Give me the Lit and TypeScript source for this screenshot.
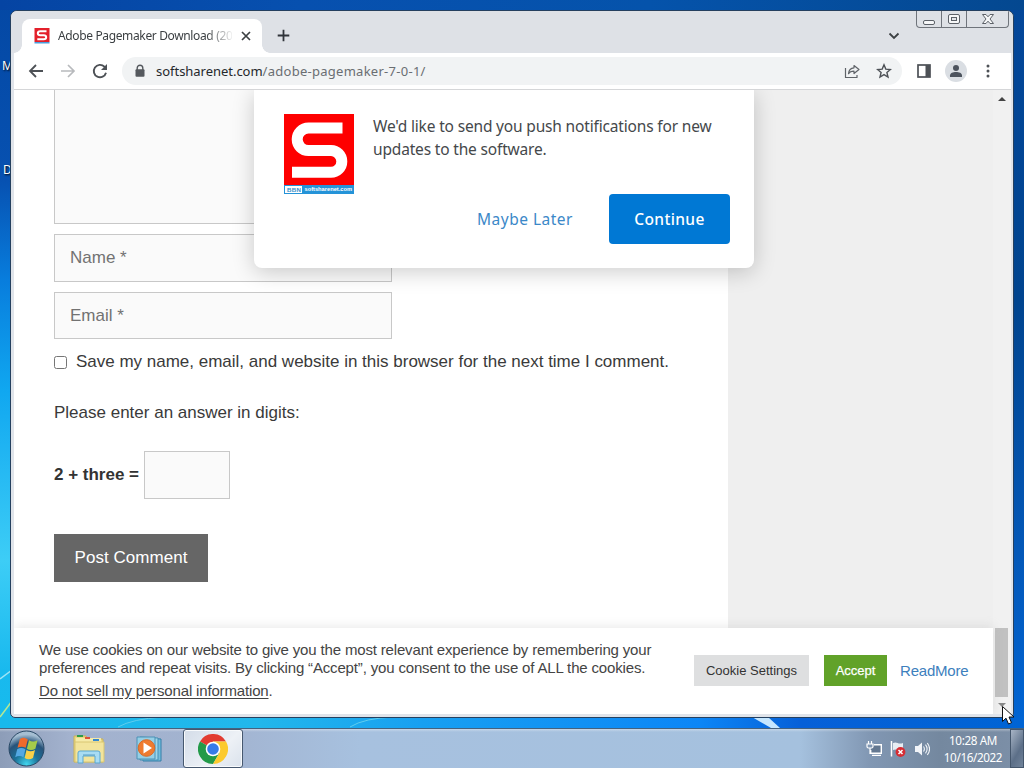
import { LitElement, html, css, svg } from "lit";
import { customElement } from "lit/decorators.js";

const brandLogo = html`<svg class="brand" viewBox="0 0 70 80">
  <rect width="70" height="72" fill="#fe0000" />
  <path d="M58.500 14H24.500A11.300 11.300 0 0 0 24.500 36.600H47A10.800 10.800 0 0 1 47 58.200H8" fill="none" stroke="#fff" stroke-width="11" />
  <rect y="71" width="70" height="9" fill="#2493d8" />
  <rect x="1" y="72" width="17" height="7" fill="#fff" />
  <text x="3" y="78" font-size="6.200" font-weight="700" fill="#3a8fc8" textLength="14">BBN</text>
  <text x="20.500" y="77" font-size="6" font-weight="700" fill="#fff" textLength="47.500" lengthAdjust="spacingAndGlyphs">softsharenet.com</text>
</svg>`;

@customElement("chrome-toolbar")
export class ChromeToolbar extends LitElement {
  static styles = css`
    :host { display: block; font-family: "Noto Sans", sans-serif; color: #3c4043; }
    svg { display: block; flex: none; }
    .strip { height: 42px; display: flex; background: #dee1e6; border-radius: 5px 5px 0 0; padding-left: 11px; align-items: flex-start; }
    .tab { position: relative; margin-top: 8px; width: 240px; height: 34px; background: #fff; border-radius: 8px 8px 0 0; display: flex; align-items: center; box-sizing: border-box; padding-left: 12px; }
    .tab::before, .tab::after { content: ""; position: absolute; bottom: 0; width: 8px; height: 8px; }
    .tab::before { left: -8px; background: radial-gradient(circle at 0 0, transparent 7.5px, #fff 8px); }
    .tab::after { right: -8px; background: radial-gradient(circle at 100% 0, transparent 7.5px, #fff 8px); }
    .title { width: 174px; margin-left: 8px; overflow: hidden; white-space: nowrap; font-size: 12px; letter-spacing: -0.36px; line-height: 18px; -webkit-mask-image: linear-gradient(90deg, #000 148px, transparent 176px); mask-image: linear-gradient(90deg, #000 148px, transparent 176px); }
    .close { margin-left: 8px; }
    .plus { margin: 18px 0 0 15px; }
    .space { flex: 1; }
    .chev { margin: 21px 16px 0 0; }
    .caption { display: flex; width: 91px; height: 16px; border: 1px solid #6f747b; border-top: 0; border-radius: 0 0 4px 4px; margin-right: 4px; }
    .caption div { display: flex; align-items: center; justify-content: center; box-sizing: border-box; border-right: 1px solid #6f747b; width: 25px; }
    .caption div:last-child { width: 41px; border: 0; }
    .bar { margin: 0 2px 0 3px; height: 36px; background: #fff; display: flex; align-items: center; border-bottom: 1px solid #d5d6d8; padding-left: 14px; }
    .bar > svg { margin-right: 16px; }
    .omni { margin-left: -2px; width: 780px; height: 28px; border-radius: 14px; background: #f1f3f4; display: flex; align-items: center; box-sizing: border-box; padding: 0 10px 0 12px; }
    .url { margin-left: 10px; flex: 1; font-size: 13px; color: #6a6e72; white-space: nowrap; line-height: 20px; letter-spacing: .27px; }
    .url b { font-weight: 400; color: #25282c; letter-spacing: -.03px; }
    .share { margin-right: 16px; }
    .panel { margin-left: 14px; }
    .avatar { width: 22px; height: 22px; border-radius: 50%; background: #dadee3; display: flex; align-items: center; justify-content: center; margin: 0 19px 0 -3px; }
  `;
  render() {
    return html`
      <div class="strip">
        <div class="tab">
          <svg width="16" height="16" viewBox="0 0 16 16"><path fill="#e3202b" d="M.5 0h15v14H.5z"/><path fill="#4aa0dd" d="M.5 14h15v1.500H.5z"/><path d="M12.500 3.200H6.300C3 3.200 3 7.200 6.300 7.200h3.400c3.300 0 3.300 4.100 0 4.100H3.300" fill="none" stroke="#fff" stroke-width="2"/></svg>
          <div class="title">Adobe Pagemaker Download (2022)</div>
          <svg class="close" width="12" height="12" viewBox="0 0 12 12"><path d="M2 2l8 8M10 2l-8 8" stroke="#3c4043" stroke-width="1.700"/></svg>
        </div>
        <svg class="plus" width="13" height="13" viewBox="0 0 13 13"><path d="M6.500 .7v11.600M.7 6.500h11.600" stroke="#30343a" stroke-width="1.800"/></svg>
        <div class="space"></div>
        <svg class="chev" width="12" height="8" viewBox="0 0 12 8"><path d="M1.500 1.500L6 6l4.500-4.500" fill="none" stroke="#3c4043" stroke-width="1.800"/></svg>
        <div class="caption">
          <div><svg width="14" height="14" viewBox="0 0 14 14"><rect x="1.500" y="8.500" width="11" height="4" rx="1.500" fill="#f6f7f8" stroke="#5c6168"/></svg></div>
          <div><svg width="14" height="14" viewBox="0 0 14 14"><rect x="1.500" y="2.500" width="11" height="9" rx="1.500" fill="#f6f7f8" stroke="#5c6168"/><rect x="4.500" y="5.500" width="5" height="3" fill="#e4e6ea" stroke="#5c6168"/></svg></div>
          <div><svg width="14" height="14" viewBox="0 0 14 14"><path d="M1.500 2.500h3.500l2 2.300 2-2.300h3.500L9 7l3.500 4.500H9L7 9.200l-2 2.300H1.500L5 7z" fill="#f6f7f8" stroke="#5c6168"/></svg></div>
        </div>
      </div>
      <div class="bar">
        <svg width="16" height="16" viewBox="0 0 16 16"><path d="M15 8H2.500M8 2L2 8l6 6" fill="none" stroke="#4d5156" stroke-width="1.800"/></svg>
        <svg width="16" height="16" viewBox="0 0 16 16"><path d="M1 8h12.500M8 2l6 6-6 6" fill="none" stroke="#b8babd" stroke-width="1.700"/></svg>
        <svg width="16" height="16" viewBox="0 0 16 16"><path d="M14 9.700A6.200 6.200 0 1 1 12.400 3.700L14 5.300" fill="none" stroke="#4d5156" stroke-width="1.900"/><path d="M15 1v6H9z" fill="#4d5156"/></svg>
        <div class="omni">
          <svg width="12" height="14" viewBox="0 0 12 14"><path d="M3.200 6V4a2.800 2.800 0 0 1 5.600 0v2" fill="none" stroke="#55595e" stroke-width="1.400"/><rect x="1.500" y="5.300" width="9" height="7.500" rx="1" fill="#55595e"/></svg>
          <div class="url"><b>softsharenet.com</b>/adobe-pagemaker-7-0-1/</div>
          <svg class="share" width="16" height="16" viewBox="0 0 16 16"><path d="M1.500 5v9.500h11.500v-2.500M10 2.500l5 4-5 4V8.200C7 8.200 5.500 9 4.500 10.700 4.800 7.200 7 5 10 4.800z" fill="none" stroke="#5f6368" stroke-width="1.200" stroke-linejoin="round"/></svg>
          <svg width="16" height="16" viewBox="0 0 16 16"><path d="M8 1.800l1.800 4.300 4.600.4-3.500 3 1.100 4.500L8 11.600 4 14l1.100-4.500-3.500-3 4.600-.4z" fill="none" stroke="#4d5156" stroke-width="1.400"/></svg>
        </div>
        <svg class="panel" width="16" height="16" viewBox="0 0 16 16"><rect x="2" y="2" width="12" height="12" fill="none" stroke="#4d5156" stroke-width="1.700"/><path d="M9.500 2H14v12H9.500z" fill="#4d5156"/></svg>
        <div class="avatar"><svg width="14" height="14" viewBox="0 0 14 14"><circle cx="7" cy="4" r="3" fill="#4c535d"/><path d="M1 13V11.500C1 9 4 8 7 8s6 1 6 3.500V13z" fill="#4c535d"/></svg></div>
        <svg width="4" height="16" viewBox="0 0 4 16"><g fill="#4d5156"><circle cx="2" cy="3" r="1.500"/><circle cx="2" cy="8" r="1.500"/><circle cx="2" cy="13" r="1.500"/></g></svg>
      </div>`;
  }
}

@customElement("comment-page")
export class CommentPage extends LitElement {
  static styles = css`
    :host { display: flex; position: relative; height: 624px; margin: 0 2px 0 3px; overflow: hidden; background: #f1f1f1; font-family: "Liberation Sans", sans-serif; font-size: 17px; color: #3a3a3a; }
    .form { width: 714px; height: 624px; background: #fff; box-sizing: border-box; padding-left: 40px; white-space: nowrap; }
    .side { width: 265px; background: #efefef; }
    .field { box-sizing: border-box; width: 338px; border: 1px solid #c8c8c8; background: #fafafa; color: #727272; padding-left: 15px; }
    .area { height: 134px; border-top: 0; }
    .name { height: 48px; margin-top: 10px; line-height: 46px; }
    .email { height: 47px; margin-top: 10px; line-height: 46px; }
    .save { display: flex; align-items: center; height: 24px; margin-top: 11px; letter-spacing: -0.005px; }
    .check { width: 13px; height: 13px; box-sizing: border-box; border: 1px solid #767676; border-radius: 2.500px; margin: 1px 9px 0 0; background: #fff; }
    .ask { margin-top: 26px; line-height: 26px; }
    .sum { display: flex; align-items: center; height: 48px; margin-top: 25px; font-weight: 700; color: #333; }
    .answer { width: 86px; height: 48px; margin-left: 5px; }
    .post { margin-top: 35px; width: 154px; height: 48px; line-height: 47px; text-align: center; background: #666; color: #fff; letter-spacing: .04px; }
    .scroll { width: 17px; display: flex; flex-direction: column; align-items: center; }
    .up { margin-top: 7px; border: 4px solid transparent; border-top: 0; border-bottom: 4px solid #444; }
    .thumb { margin-top: 527px; width: 13px; height: 69px; background: #c1c1c1; }
    .down { margin-top: 6px; border: 4px solid transparent; border-bottom: 0; border-top: 4px solid #888; }
    .push { position: absolute; left: 240px; top: 0; width: 500px; height: 178px; box-sizing: border-box; border-radius: 0 0 8px 8px; background: #fff; box-shadow: 0 4px 22px rgba(0,0,0,.2); padding: 24px 24px 0 30px; display: flex; font-family: "Noto Sans", sans-serif; font-size: 15.500px; }
    .brand { width: 70px; height: 80px; flex: none; font-family: "Liberation Sans", sans-serif; }
    .msg { margin-left: 19px; flex: 1; }
    .text { line-height: 23px; margin-top: 1px; white-space: nowrap; color: #45484b; letter-spacing: -.17px; }
    .acts { display: flex; justify-content: flex-end; align-items: center; margin-top: 33px; letter-spacing: .5px; }
    .later { color: #3b88c8; margin-right: 36px; }
    .go { width: 121px; height: 50px; line-height: 50px; text-align: center; border-radius: 4px; background: #0078d4; color: #fff; font-weight: 500; letter-spacing: .35px; }
    .cookie { position: absolute; left: 0; top: 538px; width: 979px; height: 86px; box-sizing: border-box; background: #fff; box-shadow: 0 -1px 10px rgba(172,171,171,.3); display: flex; align-items: center; padding: 0 25px 2px; font-size: 15px; color: #444; }
    .words { width: 655px; flex: none; line-height: 18px; white-space: nowrap; letter-spacing: -0.16px; }
    .words u { text-underline-offset: 2px; }
    .l3 { margin-top: 5px; }
    .btn { height: 31px; line-height: 31px; text-align: center; font-size: 13px; flex: none; }
    .set { width: 115px; background: #dedfe0; color: #333; }
    .ok { width: 63px; margin-left: 15px; background: #61a229; color: #fff; -webkit-text-stroke: .25px #fff; }
    .more { margin-left: 13px; color: #3d80bd; letter-spacing: -.2px; }
  `;
  render() {
    return html`
      <div class="form">
        <div class="field area"></div>
        <div class="field name">Name *</div>
        <div class="field email">Email *</div>
        <div class="save"><span class="check"></span>Save my name, email, and website in this browser for the next time I comment.</div>
        <div class="ask">Please enter an answer in digits:</div>
        <div class="sum">2 + three = <span class="field answer"></span></div>
        <div class="post">Post Comment</div>
      </div>
      <div class="side"></div>
      <div class="scroll"><div class="up"></div><div class="thumb"></div><div class="down"></div></div>
      <div class="push">
        ${brandLogo}
        <div class="msg">
          <div class="text">We'd like to send you push notifications for new<br />updates to the software.</div>
          <div class="acts"><span class="later">Maybe Later</span><span class="go">Continue</span></div>
        </div>
      </div>
      <div class="cookie">
        <div class="words">
          <div>We use cookies on our website to give you the most relevant experience by remembering your</div>
          <div>preferences and repeat visits. By clicking “Accept”, you consent to the use of ALL the cookies.</div>
          <div class="l3"><u>Do not sell my personal information</u>.</div>
        </div>
        <div class="btn set">Cookie Settings</div>
        <div class="btn ok">Accept</div>
        <div class="more">ReadMore</div>
      </div>`;
  }
}

@customElement("task-bar")
export class TaskBar extends LitElement {
  static styles = css`
    :host { display: flex; height: 40px; box-sizing: border-box; border-top: 1px solid #45627e; background: linear-gradient(180deg, rgba(255,255,255,.35), transparent 3px), linear-gradient(90deg, #8d9db8 0, #a3b2ce 70px, #a2b3d0 220px, #a7c1df 360px, #a5c1de 800px, #8197b3 870px, #74889f 940px, #7d90a8 1024px); align-items: center; font-family: "Noto Sans", sans-serif; }
    svg { display: block; flex: none; }
    .orb { margin-left: 8px; }
    .folder { margin-left: 28px; }
    .media { margin-left: 31px; }
    .active { margin-left: 18px; width: 60px; height: 39px; box-sizing: border-box; border: 1px solid #46586f; border-radius: 3px; background: linear-gradient(135deg, #d3dce8, #edf1f6 60%, #dae2ec); box-shadow: inset 0 0 0 1px #f8fafc; display: flex; align-items: center; justify-content: center; }
    .space { flex: 1; }
    .tray { display: flex; gap: 8px; align-items: center; margin-right: 13px; }
    .clock { width: 60px; text-align: center; color: #fff; font-size: 11.700px; line-height: 17px; letter-spacing: -.38px; white-space: nowrap; margin-right: 7px; }
    .show { width: 14px; height: 39px; box-sizing: border-box; border: 1px solid #44566c; background: linear-gradient(120deg, #a8b5c6, #5c6f88 60%, #71839a); }
  `;
  render() {
    return html`
      <svg class="orb" width="37" height="37" viewBox="0 0 37 37">
        <defs><radialGradient id="o" cx="50%" cy="95%" r="85%"><stop offset="0" stop-color="#42d6ee"/><stop offset=".4" stop-color="#1b7299"/><stop offset=".75" stop-color="#27537a"/><stop offset="1" stop-color="#a5bed2"/></radialGradient></defs>
        <circle cx="18.500" cy="18.500" r="17.500" fill="url(#o)" stroke="#294865"/>
        <path d="M11.800 9.200q4-3 8 .2l-2.100 8.400q-4-2.300-8.200 0z" fill="#ee6a2c"/><path d="M21 10.200q4 2.500 8.500 0l-2.100 8.500q-4.500 2.500-8.500 0z" fill="#a4cb4a"/><path d="M9.200 19.200q4-2.300 8.200 0l-2 8q-4-2.200-8.200 0z" fill="#54a8e3"/><path d="M18.500 20q4.200 2.500 8.500 0l-2 8q-4.300 2.400-8.400 0z" fill="#f8d049"/>
      </svg>
      <svg class="folder" width="32" height="30" viewBox="0 0 32 30">
        <path d="M1 2h12l2 3h15v23H1z" fill="#ead983" stroke="#c9b158"/><path d="M3 4h25v22H3z" fill="#f5eaa8"/><path d="M2 8h29v20H2z" fill="#f2e49c" stroke="#d8c673"/>
        <path d="M4 1h6v2H4z" fill="#2d9c4b"/><path d="M12 3h5v2h-5z" fill="#dd513a"/><path d="M20 5h6v2h-6z" fill="#3488d0"/>
        <path d="M5 29V19q0-2 2-2h18q2 0 2 2v10h-5v-7H10v7z" fill="#a8dcf3" stroke="#5ba7cf"/><path d="M10 21h12" stroke="#5b9fc2"/>
      </svg>
      <svg class="media" width="29" height="28" viewBox="0 0 29 28">
        <path d="M7 3l18 1v22H7z" fill="#74bddd" stroke="#357ea7"/><path d="M4 2l18 1v22H4z" fill="#a0d6e9" stroke="#4590b5"/><path d="M1 2h18v22H1z" fill="#96cfe5" stroke="#4b91b6"/><circle cx="10.500" cy="13" r="8.300" fill="#ef7b2f" stroke="#d76a28"/><path d="M7.500 7.500l8.500 5.500-8.500 5.500z" fill="#fff"/>
      </svg>
      <div class="active"><svg width="30" height="30" viewBox="0 0 30 30">
        <path d="M15 15L2 7.500A15 15 0 0 1 28 7.500H15z" fill="#e23c31"/><path d="M15 15L2 7.500A15 15 0 0 0 15 30l6.500-11.300z" fill="#239a49"/><path d="M15 7.500h13A15 15 0 0 1 15 30l6.500-11.300z" fill="#fcca2e"/><circle cx="15" cy="15" r="7.300" fill="#fff"/><circle cx="15" cy="15" r="5.800" fill="#367be8"/>
      </svg></div>
      <div class="space"></div>
      <div class="tray">
        <svg width="16" height="16" viewBox="0 0 16 16"><path d="M8 3.700h7.300v8.600H4.700V9" fill="#647891" stroke="#fff" stroke-width="1.400"/><path d="M6 14.300h9M2.500 0v3M5.500 0v3M1 3v2.500q0 1.500 1.500 1.500h3Q7 7 7 5.500V3zM4 7v5.500h1" fill="none" stroke="#fff" stroke-width="1.200"/></svg>
        <svg width="16" height="16" viewBox="0 0 16 16"><path d="M1.500 0v15.500" stroke="#fff" stroke-width="1.500"/><path d="M3 2c4-2 5 2 10 0v7C8 11 7 7 3 9z" fill="#e7edf3"/><circle cx="10.500" cy="11" r="4.900" fill="#d62d34"/><path d="M8.500 9l4 4M12.500 9l-4 4" stroke="#fff" stroke-width="1.500"/></svg>
        <svg width="16" height="16" viewBox="0 0 16 16"><path d="M1 5h3l4-3.500v13L4 11H1z" fill="#f1f4f8"/><path d="M9.500 5.500q1.800 2.500 0 5M11.500 3.700q3.200 4.300 0 8.600M13.300 2q4.500 6 0 12" fill="none" stroke="#f1f4f8" stroke-width="1.100"/></svg>
      </div>
      <div class="clock">10:28 AM<br />10/16/2022</div>
      <div class="show"></div>`;
  }
}

@customElement("app-root")
export class AppRoot extends LitElement {
  static styles = css`
    :host { display: flex; flex-direction: column; width: 1024px; height: 768px; overflow: hidden; position: relative; }
    .desk { position: relative; height: 728px; overflow: hidden; background: linear-gradient(180deg, #0448a4 0, #0751b1 180px, #087ddd 280px, #10a7f0 390px, #3dcdf6 560px, #19b9ee 670px, #16bbed 728px); }
    .desk::before { content: ""; position: absolute; right: 0; top: 0; width: 20px; height: 728px; background: linear-gradient(180deg, #04479a, #00448f 300px, #0458b8 550px, #0064d4 728px); }
    .sheen { position: absolute; left: 0; bottom: 0; width: 1024px; height: 11px; background: linear-gradient(90deg, #18b9ec, #22b7eb 260px, #18a0f1 420px, #0c86f6 700px, #0660d8 800px, #0064d4); }
    .top { position: absolute; left: 0; top: 0; width: 1024px; height: 10px; background: linear-gradient(90deg, #0544a3, #0750af 300px, #0553ab 650px, #044890); }
    .rays { position: absolute; left: 0; top: 600px; }
    .label { position: absolute; font: 12px/16px "Noto Sans", sans-serif; color: #fff; text-shadow: 1px 1px 2px #000; }
    .m { left: 2px; top: 58px; }
    .d { left: 3px; top: 162px; }
    .window { position: absolute; left: 10px; top: 10px; width: 1002px; height: 706px; border: 1px solid #25405f; border-radius: 7px 7px 5px 5px; background: #e0e4ea; box-sizing: content-box; overflow: hidden; }
    .cursor { position: absolute; left: 1001px; top: 705px; }
  `;
  render() {
    return html`
      <div class="desk">
        <div class="top"></div><div class="sheen"></div>
        <svg class="rays" width="1024" height="128" viewBox="0 0 1024 128">${svg`<path d="M0 79l12-9" stroke="#9fe4f5" stroke-width="1.500"/><path d="M0 117l12-16" stroke="#b6e894" stroke-width="1.500"/><path d="M118 127q14-8 45-10M350 127q14-9 45-10" fill="none" stroke="#5fcdee" stroke-width="1"/><path d="M752 117l16 0 12 11h-9z" fill="#c6e7ff"/>`}</svg>
        <div class="label m">M</div><div class="label d">D</div>
        <div class="window"><chrome-toolbar></chrome-toolbar><comment-page></comment-page></div>
      </div>
      <task-bar></task-bar>
      <svg class="cursor" width="14" height="21" viewBox="0 0 14 21"><path d="M1.500 1.500v15l3.500-3.300 2.500 5.800 3-1.300L8 12h5z" fill="#fff" stroke="#111"/></svg>`;
  }
}
